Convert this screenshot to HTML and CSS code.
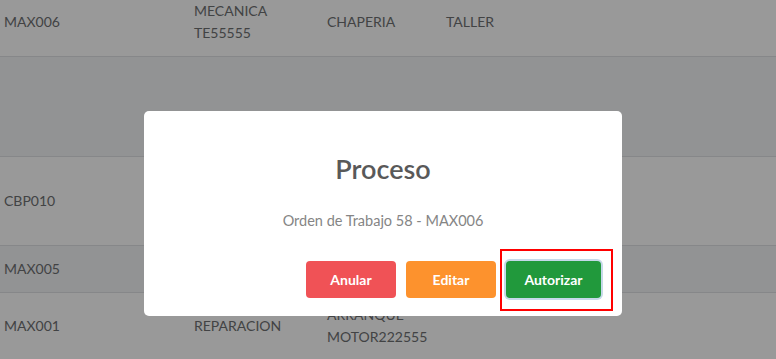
FILE: index.html
```html
<!DOCTYPE html>
<html lang="es">
<head>
    <meta charset="UTF-8">
    <title>Ordenes de Trabajo</title>
    <link rel="stylesheet" href="styles.css">
</head>
<body>
    <table class="orders">
        <tbody>
            <tr class="row-1">
                <td>MAX006</td>
                <td>MECANICA<br>TE55555</td>
                <td>CHAPERIA</td>
                <td>TALLER</td>
            </tr>
            <tr class="row-2 striped">
                <td></td>
                <td></td>
                <td></td>
                <td></td>
            </tr>
            <tr class="row-3">
                <td>CBP010</td>
                <td></td>
                <td></td>
                <td></td>
            </tr>
            <tr class="row-4 striped">
                <td>MAX005</td>
                <td></td>
                <td></td>
                <td></td>
            </tr>
            <tr class="row-5">
                <td>MAX001</td>
                <td>REPARACION</td>
                <td>ARRANQUE<br>MOTOR222555</td>
                <td></td>
            </tr>
        </tbody>
    </table>

    <div class="backdrop">
        <div class="dialog">
            <h2 class="dialog-title">Proceso</h2>
            <p class="dialog-text">Orden de Trabajo 58 - MAX006</p>
            <div class="dialog-actions">
                <button type="button" class="btn btn-cancel">Anular</button>
                <button type="button" class="btn btn-edit">Editar</button>
                <span class="marked">
                    <button type="button" class="btn btn-confirm">Autorizar</button>
                </span>
            </div>
        </div>
    </div>
</body>
</html>
```

FILE: styles.css
```css
* {
    box-sizing: border-box;
    margin: 0;
    padding: 0;
}

body {
    font-family: "Source Sans Pro", Lato, "Noto Sans", sans-serif;
    background-color: white;
    color: #6e7072;
    font-size: 14px;
    overflow: hidden;
}

.orders {
    width: 100%;
    border-collapse: collapse;
}

.orders td {
    padding: 0 4px;
    line-height: 22px;
    vertical-align: middle;
    border-bottom: 1px solid #dfe2e5;
}

.orders td:nth-child(1) { width: 190px; }
.orders td:nth-child(2) { width: 133px; }
.orders td:nth-child(3) { width: 119px; }

.striped td {
    background-color: #f4f5f7;
}

.row-1 td { height: 56px; padding-bottom: 11px; }
.row-2 td { height: 100px; }
.row-3 td { height: 89px; }
.row-4 td { height: 47px; }
.row-5 td { height: 67px; }

.backdrop {
    position: fixed;
    top: 0;
    left: 0;
    right: 0;
    bottom: 0;
    background-color: rgba(0, 0, 0, 0.4);
    display: flex;
    justify-content: center;
    align-items: flex-start;
    padding: 111px 10px 0 0;
}

.dialog {
    width: 478px;
    background-color: white;
    border-radius: 5px;
    padding: 41px 21px 18px 21px;
    text-align: center;
}

.dialog-title {
    font-size: 27px;
    font-weight: 600;
    color: #595959;
    line-height: 34px;
}

.dialog-text {
    font-size: 14.5px;
    color: #858585;
    margin-top: 24px;
    line-height: 22px;
}

.dialog-actions {
    display: flex;
    justify-content: flex-end;
    gap: 10px;
    margin-top: 29px;
}

.btn {
    height: 37px;
    border: none;
    border-radius: 4px;
    color: white;
    font-family: inherit;
    font-size: 14px;
    font-weight: bold;
    cursor: pointer;
}

.btn-cancel {
    width: 90px;
    background-color: #f05256;
}

.btn-edit {
    width: 90px;
    background-color: #fd922d;
}

.btn-confirm {
    width: 95px;
    background-color: #21993c;
    box-shadow: 0 0 0 2px #c6d9e9;
}

.marked {
    position: relative;
    display: flex;
}

.marked::after {
    content: "";
    position: absolute;
    top: -12px;
    left: -6px;
    right: -12px;
    bottom: -13px;
    border: 2px solid #ff0000;
    pointer-events: none;
}
```
